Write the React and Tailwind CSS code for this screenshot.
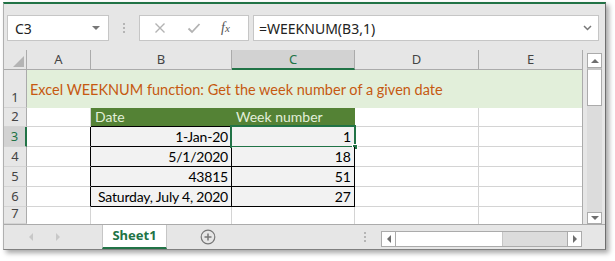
import React from 'react';

const COLS = ['A', 'B', 'C', 'D', 'E'];

const DATA = [
  { n: 3, date: '1-Jan-20', week: '1' },
  { n: 4, date: '5/1/2020', week: '18' },
  { n: 5, date: '43815', week: '51' },
  { n: 6, date: 'Saturday, July 4, 2020', week: '27' },
];

const cellFont = { fontFamily: 'Lato, "Liberation Sans", sans-serif' };
const uiFont = { fontFamily: '"Noto Sans", "Open Sans", sans-serif' };

function RowHead({ n, selected }) {
  return (
    <div
      style={uiFont}
      className={
        'flex items-end justify-center text-[13px] leading-none pb-[3px] border-b border-b-[#d4d4d4] ' +
        (selected
          ? 'bg-[#d2d2d2] text-[#217346] border-r-2 border-r-[#217346]'
          : 'bg-[#e6e6e6] text-[#444] border-r border-r-[#ababab]')
      }
    >
      {n}
    </div>
  );
}

export default function App() {
  return (
    <div className="w-[615px] h-[261px] bg-white pl-[3px] pt-[2px] overflow-hidden">
      <div className="w-[603px] h-[248px] flex flex-col bg-[#e6e6e6] border-t-2 border-t-[#217346] border-l border-l-[#b0b0b0] border-r border-r-[#6e6e6e] border-b border-b-[#808080] shadow-[3px_3px_5px_rgba(0,0,0,0.35)]">
        {/* Formula bar */}
        <div className="h-[46px] flex items-start pt-[11px] pl-[3px] shrink-0">
          <div className="w-[102px] h-[26px] bg-white border border-[#c6c6c6] flex items-center justify-between pl-[7px] pr-[8px]">
            <span style={uiFont} className="text-[14px] text-[#222]">C3</span>
            <span className="w-0 h-0 border-l-[4px] border-r-[4px] border-t-[4px] border-l-transparent border-r-transparent border-t-[#777]" />
          </div>
          <div className="ml-[14px] mt-[8px] flex flex-col gap-[2px]">
            <span className="w-[2px] h-[2px] bg-[#b5b5b5]" />
            <span className="w-[2px] h-[2px] bg-[#b5b5b5]" />
            <span className="w-[2px] h-[2px] bg-[#b5b5b5]" />
          </div>
          <div className="ml-[14px] w-[110px] h-[26px] bg-white border border-[#c6c6c6] flex items-center">
            <svg width="12" height="12" viewBox="0 0 12 12" className="ml-[14px]">
              <path d="M1.5 1.5L10.5 10.5M10.5 1.5L1.5 10.5" stroke="#b3b3b3" strokeWidth="1.4" fill="none" />
            </svg>
            <svg width="14" height="12" viewBox="0 0 14 12" className="ml-[21px]">
              <path d="M1.5 6.5L5 10L12.5 2" stroke="#b3b3b3" strokeWidth="1.8" fill="none" />
            </svg>
            <span className="ml-[20px] text-[14px] text-[#555] italic leading-none" style={{ fontFamily: '"Liberation Serif", serif' }}>
              f<span className="text-[11px]">x</span>
            </span>
          </div>
          <div className="ml-[4px] w-[346px] h-[26px] bg-white border border-[#c6c6c6] flex items-center justify-between pl-[5px] pr-[6px]">
            <span style={uiFont} className="text-[14px] text-[#222]">=WEEKNUM(B3,1)</span>
            <svg width="9" height="6" viewBox="0 0 9 6">
              <path d="M1 1L4.5 4.5L8 1" stroke="#777" strokeWidth="1.5" fill="none" />
            </svg>
          </div>
        </div>

        {/* Grid + vertical scrollbar */}
        <div className="h-[174px] flex shrink-0">
          <div className="w-[579px] border-r border-r-[#ababab] bg-white grid grid-cols-[23px_64px_141px_123px_124px_104px] grid-rows-[20px_38px_19px_20px_20px_20px_20px_17px] overflow-hidden">
            {/* header row */}
            <div className="bg-[#e6e6e6] border-r border-r-[#ababab] border-b border-b-[#ababab] flex items-end justify-end pr-[2px] pb-[2px]">
              <span className="w-0 h-0 border-b-[11px] border-b-[#b4b4b4] border-l-[11px] border-l-transparent" />
            </div>
            {COLS.map((c) => (
              <div
                key={c}
                style={uiFont}
                className={
                  'flex items-center justify-center text-[13px] pt-[1px] ' +
                  (c === 'C'
                    ? 'bg-[#d2d2d2] text-[#217346] border-b-2 border-b-[#217346] border-r border-r-[#ababab]'
                    : 'bg-[#e6e6e6] text-[#444] border-b border-b-[#ababab] border-r border-r-[#ababab]')
                }
              >
                {c}
              </div>
            ))}

            {/* row 1 */}
            <RowHead n={1} />
            <div
              style={cellFont}
              className="col-span-5 bg-[#e2efda] flex items-center pl-[3px] pt-[1px] text-[14.5px] text-[#c65911] whitespace-nowrap"
            >
              Excel WEEKNUM function: Get the week number of a given date
            </div>

            {/* row 2 */}
            <RowHead n={2} />
            <div className="border-r border-b border-[#d4d4d4]" />
            <div style={cellFont} className="bg-[#548235] border-b border-b-black flex items-end pl-[4px] text-[14px] text-[#e2efda] leading-[18px] whitespace-nowrap">
              Date
            </div>
            <div style={cellFont} className="bg-[#548235] border-b border-b-black flex items-end pl-[4px] text-[14px] text-[#e2efda] leading-[18px] whitespace-nowrap">
              Week number
            </div>
            <div className="border-r border-b border-[#d4d4d4]" />
            <div className="border-b border-[#d4d4d4]" />

            {/* data rows */}
            {DATA.map((r) => (
              <React.Fragment key={r.n}>
                <RowHead n={r.n} selected={r.n === 3} />
                <div className="border-r border-r-black border-b border-b-[#d4d4d4]" />
                <div style={cellFont} className="bg-[#f2f2f2] border-r border-b border-black flex items-end justify-end pr-[3px] text-[14px] text-black leading-[18px] whitespace-nowrap tracking-[-0.2px]">
                  {r.date}
                </div>
                <div style={cellFont} className="relative bg-[#f2f2f2] border-r border-b border-black flex items-end justify-end pr-[3px] text-[14px] text-black leading-[18px] whitespace-nowrap">
                  {r.week}
                  {r.n === 3 && (
                    <>
                      <span className="absolute -left-[2px] -top-[2px] -right-[2px] -bottom-[2px] border-2 border-[#217346]" />
                      <span className="absolute -right-[4px] -bottom-[4px] w-[6px] h-[6px] bg-[#217346] border border-white" />
                    </>
                  )}
                </div>
                <div className="border-r border-b border-[#d4d4d4]" />
                <div className="border-b border-[#d4d4d4]" />
              </React.Fragment>
            ))}

            {/* row 7 */}
            <RowHead n={7} />
            <div className="border-r border-[#d4d4d4]" />
            <div className="border-r border-[#d4d4d4]" />
            <div className="border-r border-[#d4d4d4]" />
            <div className="border-r border-[#d4d4d4]" />
            <div />
          </div>

          {/* vertical scrollbar */}
          <div className="ml-[4px] w-[15px] pt-[3px] flex flex-col">
            <div className="h-[15px] bg-white border border-[#ababab] flex items-center justify-center">
              <span className="w-0 h-0 border-l-[4px] border-r-[4px] border-b-[4px] border-l-transparent border-r-transparent border-b-[#6e6e6e]" />
            </div>
            <div className="h-[38px] bg-white border border-[#ababab] border-t-2 border-t-[#c6c6c6]" />
            <div className="flex-1 bg-[#dcdcdc]" />
            <div className="h-[12px] bg-white border border-[#ababab] flex items-center justify-center">
              <span className="w-0 h-0 border-l-[4px] border-r-[4px] border-t-[4px] border-l-transparent border-r-transparent border-t-[#6e6e6e]" />
            </div>
          </div>
        </div>

        {/* Sheet tabs */}
        <div className="h-[25px] flex items-stretch border-t border-t-[#ababab] shrink-0">
          <div className="w-[98px] flex items-center pl-[25px] gap-[23px]">
            <span className="w-0 h-0 border-t-[4px] border-b-[4px] border-r-[4px] border-t-transparent border-b-transparent border-r-[#c8c8c8]" />
            <span className="w-0 h-0 border-t-[4px] border-b-[4px] border-l-[4px] border-t-transparent border-b-transparent border-l-[#c8c8c8]" />
          </div>
          <div className="w-[65px] bg-white border-l border-r border-[#c6c6c6] border-b-2 border-b-[#217346] flex items-center justify-center">
            <span style={uiFont} className="text-[13px] font-bold text-[#217346]">Sheet1</span>
          </div>
          <div className="ml-[33px] flex items-center">
            <svg width="16" height="16" viewBox="0 0 16 16">
              <circle cx="8" cy="8" r="6.8" stroke="#777" strokeWidth="1.2" fill="none" />
              <path d="M8 4.5V11.5M4.5 8H11.5" stroke="#777" strokeWidth="1.5" />
            </svg>
          </div>
          <div className="ml-[148px] mt-[7px] flex flex-col gap-[2px]">
            <span className="w-[2px] h-[2px] bg-[#b5b5b5]" />
            <span className="w-[2px] h-[2px] bg-[#b5b5b5]" />
            <span className="w-[2px] h-[2px] bg-[#b5b5b5]" />
          </div>
          <div className="ml-[15px] mt-[6px] w-[201px] h-[16px] flex border border-[#ababab] bg-[#dcdcdc]">
            <div className="w-[14px] bg-white border-r border-[#ababab] flex items-center justify-center">
              <span className="w-0 h-0 border-t-[4px] border-b-[4px] border-r-[4px] border-t-transparent border-b-transparent border-r-[#6e6e6e]" />
            </div>
            <div className="w-[107px] bg-white border-r border-[#c6c6c6]" />
            <div className="flex-1" />
            <div className="w-[14px] bg-white border-l border-[#ababab] flex items-center justify-center">
              <span className="w-0 h-0 border-t-[4px] border-b-[4px] border-l-[4px] border-t-transparent border-b-transparent border-l-[#6e6e6e]" />
            </div>
          </div>
        </div>
      </div>
    </div>
  );
}
